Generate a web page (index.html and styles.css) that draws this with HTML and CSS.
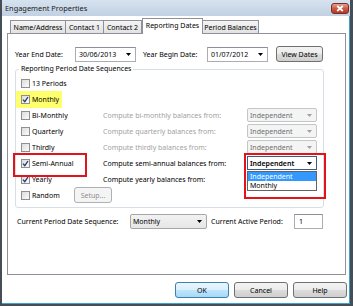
FILE: index.html
```html
<!DOCTYPE html>
<html>
<head>
    <title>Engagement Properties</title>
    <link rel="stylesheet" href="styles.css">
</head>
<body>
    <div class="window">
        <div class="titlebar">
            <span class="title">Engagement Properties</span>
            <span class="close-btn">
                <svg width="8" height="7" viewBox="0 0 8 7"><path d="M1.2 1 L6.8 6 M6.8 1 L1.2 6" stroke="#fff" stroke-width="1.7"/></svg>
            </span>
        </div>
        <div class="client">
            <div class="tabs">
                <div class="tab t-name">Name/Address</div>
                <div class="tab t-c1">Contact 1</div>
                <div class="tab t-c2">Contact 2</div>
                <div class="tab active t-rep">Reporting Dates</div>
                <div class="tab t-per">Period Balances</div>
            </div>
            <div class="panel">
                <div class="date-row">
                    <span class="lbl lbl-end">Year End Date:</span>
                    <div class="date-box"><span>30/06/2013</span><svg class="arrow" width="5" height="3" viewBox="0 0 5 3"><path d="M0 0 H5 L2.5 3 Z" fill="#000"/></svg></div>
                    <span class="lbl lbl-begin">Year Begin Date:</span>
                    <div class="date-box"><span>01/07/2012</span><svg class="arrow" width="5" height="3" viewBox="0 0 5 3"><path d="M0 0 H5 L2.5 3 Z" fill="#000"/></svg></div>
                    <button class="btn btn-view">View Dates</button>
                </div>

                <fieldset class="group">
                    <legend>Reporting Period Date Sequences</legend>
                    <div class="seq-row">
                        <span class="check"><span class="box"></span>13 Periods</span>
                    </div>
                    <div class="seq-row">
                        <span class="check"><span class="hl"><span class="box checked"><svg width="7" height="7" viewBox="0 0 7 7"><path d="M1 3.6 L2.8 5.6 L6 1" fill="none" stroke="#24386e" stroke-width="1.3"/></svg></span>Monthly</span></span>
                    </div>
                    <div class="seq-row">
                        <span class="check"><span class="box"></span>Bi-Monthly</span>
                        <span class="compute disabled">Compute bi-monthly balances from:</span>
                        <div class="combo disabled"><span>Independent</span><svg class="arrow" width="5" height="3" viewBox="0 0 5 3"><path d="M0 0 H5 L2.5 3 Z" fill="#a0a0a0"/></svg></div>
                    </div>
                    <div class="seq-row">
                        <span class="check"><span class="box"></span>Quarterly</span>
                        <span class="compute disabled">Compute quarterly balances from:</span>
                        <div class="combo disabled"><span>Independent</span><svg class="arrow" width="5" height="3" viewBox="0 0 5 3"><path d="M0 0 H5 L2.5 3 Z" fill="#a0a0a0"/></svg></div>
                    </div>
                    <div class="seq-row">
                        <span class="check"><span class="box"></span>Thirdly</span>
                        <span class="compute disabled">Compute thirdly balances from:</span>
                        <div class="combo disabled"><span>Independent</span><svg class="arrow" width="5" height="3" viewBox="0 0 5 3"><path d="M0 0 H5 L2.5 3 Z" fill="#a0a0a0"/></svg></div>
                    </div>
                    <div class="seq-row">
                        <span class="check marked"><span class="box checked"><svg width="7" height="7" viewBox="0 0 7 7"><path d="M1 3.6 L2.8 5.6 L6 1" fill="none" stroke="#24386e" stroke-width="1.3"/></svg></span>Semi-Annual</span>
                        <span class="compute">Compute semi-annual balances from:</span>
                        <div class="combo open">
                            <span>Independent</span><svg class="arrow" width="5" height="3" viewBox="0 0 5 3"><path d="M0 0 H5 L2.5 3 Z" fill="#000"/></svg>
                            <div class="drop-list">
                                <div class="item selected">Independent</div>
                                <div class="item">Monthly</div>
                            </div>
                        </div>
                    </div>
                    <div class="seq-row">
                        <span class="check"><span class="box checked"><svg width="7" height="7" viewBox="0 0 7 7"><path d="M1 3.6 L2.8 5.6 L6 1" fill="none" stroke="#24386e" stroke-width="1.3"/></svg></span>Yearly</span>
                        <span class="compute">Compute yearly balances from:</span>
                    </div>
                    <div class="seq-row">
                        <span class="check check-random"><span class="box"></span>Random</span>
                        <button class="btn btn-setup" disabled>Setup...</button>
                    </div>
                </fieldset>

                <div class="current-row">
                    <span class="lbl lbl-seq">Current Period Date Sequence:</span>
                    <div class="combo combo-seq"><span>Monthly</span><svg class="arrow" width="5" height="3" viewBox="0 0 5 3"><path d="M0 0 H5 L2.5 3 Z" fill="#000"/></svg></div>
                    <span class="lbl lbl-active">Current Active Period:</span>
                    <div class="text-box">1</div>
                </div>
            </div>
            <div class="buttons">
                <button class="btn btn-default">OK</button>
                <button class="btn">Cancel</button>
                <button class="btn">Help</button>
            </div>
        </div>
    </div>
</body>
</html>
```

FILE: styles.css
```css
* {
    box-sizing: border-box;
}
body {
    margin: 0;
    width: 353px;
    height: 306px;
    overflow: hidden;
    font-family: "Noto Sans", "Liberation Sans", sans-serif;
    font-size: 7px;
    color: #000;
    background: #fff;
}
.window {
    width: 353px;
    height: 306px;
    border-style: solid;
    border-color: #454d57;
    border-width: 0 3px 2px 2px;
    display: flex;
    flex-direction: column;
    background: #fff;
}
.titlebar {
    height: 16px;
    flex: none;
    display: flex;
    align-items: center;
    padding-left: 3px;
    background: linear-gradient(#d6e2ef, #c1d1e3);
}
.title {
    flex: 1;
    font-size: 7.4px;
    color: #1a1a1a;
}
.close-btn {
    width: 18px;
    height: 11px;
    margin-right: 1px;
    border: 1px solid #7b2d22;
    border-radius: 3px;
    background: linear-gradient(#e3a195, #cd5a45 50%, #b6381f);
    display: flex;
    align-items: center;
    justify-content: center;
}
.client {
    flex: 1;
    display: flex;
    flex-direction: column;
    border-right: 1px solid #3aa4cf;
    border-bottom: 1px solid #3aa4cf;
}

/* tabs */
.tabs {
    display: flex;
    align-items: flex-end;
    height: 15px;
    margin-top: 2px;
    padding-left: 8px;
}
.tab {
    height: 13px;
    border: 1px solid #8e9199;
    border-bottom: none;
    background: linear-gradient(#f4f4f4, #e2e2e2);
    display: flex;
    align-items: center;
    justify-content: center;
    white-space: nowrap;
}
.t-name { width: 56px; }
.t-c1 { width: 39px; margin-left: -1px; }
.t-c2 { width: 39px; margin-left: -1px; }
.t-rep { width: 61px; }
.t-per { width: 57px; margin-left: -1px; }
.tab.active {
    height: 16px;
    margin-bottom: -1px;
    background: #fff;
    position: relative;
    z-index: 1;
    padding-bottom: 2px;
}

.panel {
    width: 339px;
    height: 242px;
    margin-left: 5px;
    border: 1px solid #8e9199;
    padding: 12px 0 0 7px;
    background: #fff;
}

/* controls */
.date-row, .current-row {
    display: flex;
    align-items: center;
    height: 16px;
}
.lbl {
    white-space: nowrap;
}
.lbl-end { width: 60px; }
.lbl-begin { width: 64px; margin-left: 7px; }
.date-box {
    width: 61px;
    height: 15px;
    border: 1px solid #abadb3;
    border-top-color: #8d9096;
    background: #fff;
    display: flex;
    align-items: center;
    justify-content: space-between;
    padding: 0 4px 0 3px;
}
.btn {
    font-family: inherit;
    font-size: 7px;
    color: #000;
    height: 16px;
    padding: 0;
    border: 1px solid #707070;
    border-radius: 3px;
    background: linear-gradient(#f3f3f3, #ebebeb 50%, #dcdcdc 51%, #cfcfcf);
}
.btn-view {
    width: 47px;
    margin-left: 8px;
}
.btn:disabled {
    color: #8f8f8f;
    border-color: #adb2b5;
    background: #f4f4f4;
}

.group {
    width: 309px;
    margin: 2px 0 0;
    padding: 1px 0 4px 5px;
    border: 1px solid #d5dfe5;
    border-radius: 3px;
    min-width: 0;
}
.group legend {
    padding: 0 2px;
    margin-left: -2px;
    line-height: 10px;
}
.seq-row {
    display: flex;
    align-items: center;
    height: 16px;
}
.check {
    width: 82px;
    height: 16px;
    display: flex;
    align-items: center;
    white-space: nowrap;
}
.check-random { width: 53px; }
.hl {
    display: flex;
    align-items: center;
    height: 17px;
    margin: 0 0 0 -5px;
    padding: 0 3px 0 5px;
    background: #ffff6e;
}
.box {
    width: 9px;
    height: 9px;
    margin-right: 2px;
    border: 1px solid #8e8f8f;
    background: linear-gradient(135deg, #dcdcdc, #fbfbfb);
    display: flex;
    align-items: center;
    justify-content: center;
    flex: none;
}
.marked {
    position: relative;
}
.marked::after {
    content: "";
    position: absolute;
    left: -8px;
    top: -2px;
    width: 70px;
    height: 20px;
    border: 2px solid #e3131b;
}
.compute {
    width: 144px;
    white-space: nowrap;
}
.disabled {
    color: #a2a2a2;
}
.combo {
    width: 70px;
    height: 14px;
    border: 1px solid #a7a7a7;
    border-radius: 2px;
    background: linear-gradient(#f2f2f2, #e6e6e6);
    display: flex;
    align-items: center;
    justify-content: space-between;
    padding: 0 4px 0 2px;
    white-space: nowrap;
}
.combo.disabled {
    color: #6f6f6f;
    background: #f4f4f4;
    border-color: #c3c6c9;
}
.combo.open {
    position: relative;
    background: #fff;
    border-color: #3c5d80;
    border-radius: 0;
    font-weight: 600;
}
.combo.open::after {
    content: "";
    position: absolute;
    left: -4px;
    top: -4px;
    width: 78px;
    height: 42px;
    border: 2px solid #e3131b;
}
.drop-list {
    position: absolute;
    left: -1px;
    top: 14px;
    width: 70px;
    border: 1px solid #646464;
    background: #fff;
    font-weight: 400;
    z-index: 2;
}
.item {
    height: 9px;
    line-height: 9px;
    padding-left: 2px;
}
.item.selected {
    background: #3399ff;
    color: #fff;
}
.btn-setup {
    width: 38px;
    height: 16px;
}

.current-row {
    margin-top: 5px;
}
.lbl-seq { width: 113px; margin-left: 2px; }
.combo-seq {
    width: 77px;
    height: 15px;
}
.lbl-active { width: 83px; margin-left: 4px; }
.text-box {
    width: 29px;
    height: 15px;
    border: 1px solid #abadb3;
    border-top-color: #8d9096;
    padding-left: 4px;
    line-height: 13px;
}

.buttons {
    display: flex;
    justify-content: flex-end;
    gap: 5px;
    margin-top: 7px;
    padding-right: 2px;
}
.buttons .btn {
    width: 54px;
}
.btn-default {
    border-color: #3c7fb1;
    background: linear-gradient(#eaf6fd, #d9f0fc 50%, #bee6fd 51%, #a7d9f5);
}
```
